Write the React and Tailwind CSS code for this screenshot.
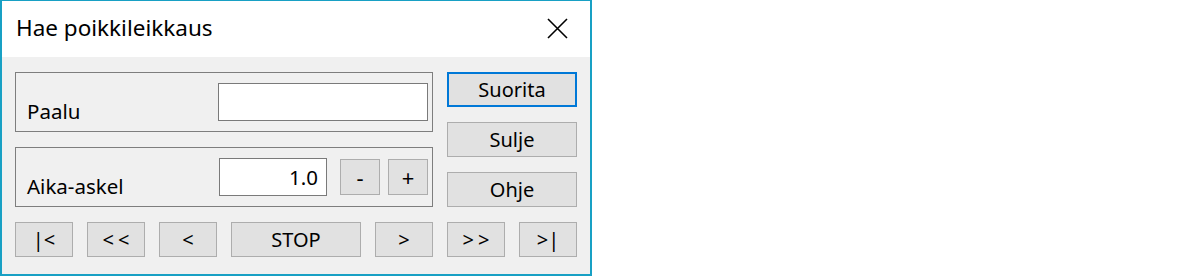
import React from 'react';

const font = { fontFamily: '"Noto Sans", "Open Sans", sans-serif' };

const Btn = ({ children, className = '', border = 'border border-[#adadad]' }) => (
  <button
    className={`flex items-center justify-center bg-[#e1e1e1] ${border} text-black text-[20px] leading-none ${className}`}
  >
    {children}
  </button>
);

export default function App() {
  return (
    <div className="w-[1200px] h-[276px] bg-white" style={font}>
      <div className="w-[592px] h-[276px] border-2 border-t border-[#18a0c4] bg-[#f0f0f0] flex flex-col">
        {/* Title bar */}
        <div className="h-[56px] bg-white flex items-center justify-between pl-[14px] pr-[22px]">
          <span className="text-[22.5px] text-black leading-none -mt-[1px]">Hae poikkileikkaus</span>
          <svg width="21" height="21" viewBox="0 0 21 21" className="-mt-[1px]">
            <path d="M1 1 L20 20 M20 1 L1 20" stroke="#000" strokeWidth="1.6" />
          </svg>
        </div>

        <div className="flex-1 pt-[15px] pl-[13px] pr-[13px]">
          <div className="flex gap-[14px]">
            {/* Left column */}
            <div className="w-[418px] flex flex-col gap-[15px]">
              <div className="h-[60px] border border-[#7e7e7e] flex items-start pl-[11px] pr-[4px]">
                <span className="mt-[26px] text-[20.5px] leading-[24px] text-black">Paalu</span>
                <div className="ml-auto mt-[10px] w-[210px] h-[38px] border border-[#7a7a7a] bg-white" />
              </div>
              <div className="h-[60px] border border-[#7e7e7e] flex items-start pl-[11px] pr-[4px]">
                <span className="mt-[26px] text-[20.5px] leading-[24px] text-black">Aika-askel</span>
                <div className="ml-auto mt-[10px] w-[108px] h-[38px] border border-[#7a7a7a] bg-white flex items-center justify-end pr-[8px] text-[20.5px] leading-none text-black">
                  1.0
                </div>
                <Btn className="ml-[13px] mt-[11px] w-[40px] h-[36px] text-[22px]">-</Btn>
                <Btn className="ml-[8px] mt-[11px] w-[40px] h-[36px] text-[22px]">+</Btn>
              </div>
            </div>

            {/* Right column */}
            <div className="w-[130px] flex flex-col gap-[15px]">
              <Btn className="h-[35px]" border="border-2 border-[#0078d7]">Suorita</Btn>
              <Btn className="h-[35px]">Sulje</Btn>
              <Btn className="h-[35px]">Ohje</Btn>
            </div>
          </div>

          {/* Bottom row */}
          <div className="mt-[15px] flex gap-[14px]">
            <Btn className="w-[58px] h-[35px]">|&lt;</Btn>
            <Btn className="w-[58px] h-[35px] tracking-[4px] pl-[4px]">&lt;&lt;</Btn>
            <Btn className="w-[58px] h-[35px]">&lt;</Btn>
            <Btn className="w-[130px] h-[35px]">STOP</Btn>
            <Btn className="w-[58px] h-[35px]">&gt;</Btn>
            <Btn className="w-[58px] h-[35px] tracking-[4px] pl-[4px]">&gt;&gt;</Btn>
            <Btn className="w-[58px] h-[35px]">&gt;|</Btn>
          </div>
        </div>
      </div>
    </div>
  );
}
